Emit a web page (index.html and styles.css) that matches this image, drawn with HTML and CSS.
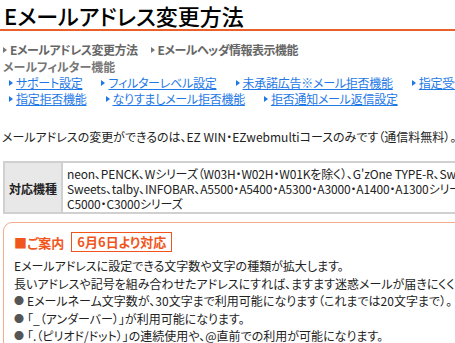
FILE: index.html
```html
<!DOCTYPE html>
<html lang="ja">
<head>
<meta charset="utf-8">
<title>Eメールアドレス変更方法</title>
<link rel="stylesheet" href="styles.css">
</head>
<body>
<div class="page">
  <h1 class="title">Eメールアドレス変更方法</h1>
  <ul class="nav">
    <li class="nav-item">Eメールアドレス変更方法</li>
    <li class="nav-item">Eメールヘッダ情報表示機能</li>
  </ul>
  <div class="subhead">メールフィルター機能</div>
  <ul class="links">
    <li class="link-item"><a href="#">サポート設定</a></li>
    <li class="link-item"><a href="#">フィルターレベル設定</a></li>
    <li class="link-item"><a href="#">未承諾広告※メール拒否機能</a></li>
    <li class="link-item"><a href="#">指定受信拒否機能</a></li>
  </ul>
  <ul class="links">
    <li class="link-item"><a href="#">指定拒否機能</a></li>
    <li class="link-item"><a href="#">なりすましメール拒否機能</a></li>
    <li class="link-item"><a href="#">拒否通知メール返信設定</a></li>
  </ul>
  <p class="lead">メールアドレスの変更ができるのは、EZ WIN・EZwebmultiコースのみです（通信料無料）。</p>
  <table class="spec">
    <tr>
      <th class="spec-head">対応機種</th>
      <td class="spec-body">neon、PENCK、Wシリーズ（W03H・W02H・W01Kを除く）、G'zOne TYPE-R、Sweets pure、<br>Sweets、talby、INFOBAR、A5500・A5400・A5300・A3000・A1400・A1300シリーズ、<br>C5000・C3000シリーズ</td>
    </tr>
  </table>
  <div class="notice">
    <div class="notice-head">
      <span class="notice-label">■ご案内</span>
      <span class="notice-date">6月6日より対応</span>
    </div>
    <p class="notice-text">Eメールアドレスに設定できる文字数や文字の種類が拡大します。<br>長いアドレスや記号を組み合わせたアドレスにすれば、ますます迷惑メールが届きにくくなります。</p>
    <ul class="bullets">
      <li class="bullet">Eメールネーム文字数が、30文字まで利用可能になります（これまでは20文字まで）。</li>
      <li class="bullet">「_（アンダーバー）」が利用可能になります。</li>
      <li class="bullet">「.（ピリオド/ドット）」の連続使用や、@直前での利用が可能になります。</li>
    </ul>
  </div>
</div>
</body>
</html>
```

FILE: styles.css
```css
html, body {
  margin: 0;
  padding: 0;
  overflow: hidden;
  background: #fff;
}
body {
  font-family: "Noto Sans CJK JP", "Noto Sans", sans-serif;
  font-feature-settings: "palt" 1;
  font-size: 12px;
  color: #222;
}
.page {
  width: 700px;
  padding: 0 0 0 3px;
}
ul {
  margin: 0;
  padding: 0;
  list-style: none;
}
.title {
  margin: 0 0 0 -3px;
  padding: 1px 0 0 4px;
  font-size: 22px;
  font-weight: 500;
  line-height: 28px;
  color: #000;
  border-bottom: 2px solid #e9602a;
}
.nav {
  display: flex;
  gap: 13px;
  margin-top: 11px;
  line-height: 16px;
  font-weight: bold;
  color: #666;
  letter-spacing: -0.5px;
}
.nav-item, .link-item {
  display: flex;
  align-items: center;
}
.nav-item::before, .link-item::before {
  content: "";
  width: 0;
  height: 0;
  border-left: 4px solid #777;
  border-top: 3.5px solid transparent;
  border-bottom: 3.5px solid transparent;
  margin-right: 3px;
}
.subhead {
  margin-top: 1px;
  line-height: 16px;
  font-weight: bold;
  color: #777;
}
.links {
  display: flex;
  gap: 19px;
  padding-left: 6px;
  line-height: 16px;
  letter-spacing: -0.25px;
}
.link-item::before {
  border-left-color: #1e78e6;
}
.link-item a {
  color: #1e78e6;
  text-decoration: underline;
}
.lead {
  margin: 22px 0 0 -1px;
  line-height: 16px;
}
.spec {
  margin-top: 16px;
  border-collapse: collapse;
  width: 680px;
}
.spec-head, .spec-body {
  border: 2px solid #d0d0d0;
  line-height: 15px;
  padding: 3px 4px 1px;
}
.spec-head {
  width: 50px;
  padding-left: 3px;
  padding-right: 3px;
  background: #e8e8e8;
  font-weight: bold;
  text-align: center;
  white-space: nowrap;
}
.spec-body {
  text-align: left;
  letter-spacing: -0.15px;
}
.notice {
  margin-top: 8px;
  width: 660px;
  border: 1.5px solid #f4ab8c;
  border-radius: 9px;
  padding: 9px 11px 10px 10px;
}
.notice-head {
  display: flex;
  align-items: center;
  gap: 7px;
}
.notice-label {
  color: #f0561c;
  font-weight: bold;
  font-size: 13px;
}
.notice-date {
  color: #f0561c;
  font-weight: bold;
  font-size: 13px;
  line-height: 16px;
  border: 1.5px solid #f0561c;
  padding: 1px 5px;
}
.notice-text {
  margin: 5px 0 0;
  line-height: 17.5px;
}
.bullets {
  margin-top: 0;
  line-height: 17.5px;
}
.bullet {
  display: flex;
  gap: 3px;
}
.bullet::before {
  content: "●";
  color: #555;
  font-size: 10px;
}
```
